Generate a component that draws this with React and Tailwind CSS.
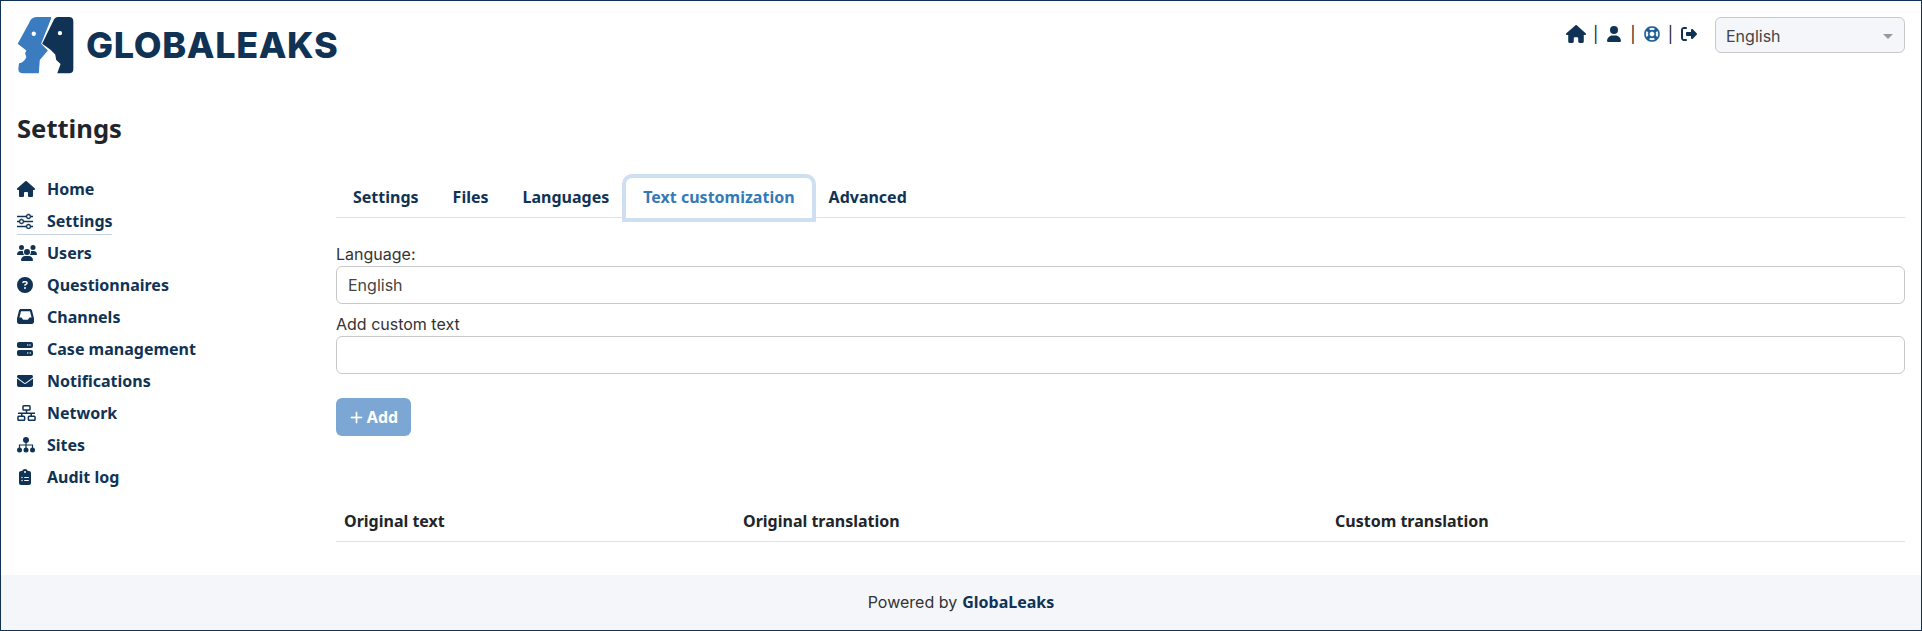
import React from "react";
import { FaHouse, FaUser, FaRightFromBracket, FaUsers, FaCircleQuestion, FaEnvelope, FaClipboardList, FaServer, FaInbox } from "react-icons/fa6";
import { FaRegLifeRing } from "react-icons/fa";
import { BsSliders, BsPlusLg } from "react-icons/bs";

function Logo() {
  return (
    <svg viewBox="50 50 170 170" className="w-[57px] h-[57px] shrink-0">
      <path fill="#3a7cbf" d="M108 50 L150 50 Q153 50 152 54 L122 130 L142 150 L118 178 L115 218 L68 218 Q54 218 54 205 L56 188 Q70 186 78 170 L74 158 L78 150 L52 130 L86 68 Q92 50 108 50 Z" />
      <path fill="#103355" d="M172 50 L205 50 Q218 50 218 63 L218 205 Q218 218 205 218 L170 218 L180 190 L167 178 L164 162 L150 148 L125 130 L158 62 Q163 50 172 50 Z" />
      <circle cx="100" cy="100" r="6.5" fill="#fff" />
      <circle cx="178" cy="98" r="6.5" fill="#fff" />
    </svg>
  );
}

function SitesIcon({ size }) {
  return (
    <svg viewBox="0 0 18 16" width={size} height={size * 16 / 18} fill="currentColor">
      <circle cx="9" cy="3" r="3" />
      <circle cx="2.5" cy="13" r="2.5" />
      <circle cx="9" cy="13" r="2.5" />
      <circle cx="15.5" cy="13" r="2.5" />
      <path d="M8.4 5h1.2v2.4h6.5v3.6h-1.2V8.6H9.6V11H8.4V8.6H3.1V11H1.9V7.4h6.5z" />
    </svg>
  );
}

function NetworkIcon({ size }) {
  return (
    <svg viewBox="0 0 20 17" width={size} height={size * 17 / 20} fill="none" stroke="currentColor" strokeWidth="1.6">
      <rect x="6.3" y="0.8" width="7.4" height="4.4" rx="0.8" />
      <path d="M10 5.2V8.6M1 8.6H19M5 8.6V11.8M15 8.6V11.8" />
      <rect x="1" y="11.8" width="7" height="4.4" rx="0.8" />
      <rect x="12" y="11.8" width="7" height="4.4" rx="0.8" />
    </svg>
  );
}

const nav = [
  [FaHouse, "Home", 18],
  [BsSliders, "Settings", 16],
  [FaUsers, "Users", 20],
  [FaCircleQuestion, "Questionnaires", 16],
  [FaInbox, "Channels", 17],
  [FaServer, "Case management", 16],
  [FaEnvelope, "Notifications", 16],
  [NetworkIcon, "Network", 19],
  [SitesIcon, "Sites", 18],
  [FaClipboardList, "Audit log", 16],
];

export default function App() {
  return (
    <div className="box-border h-[631px] border border-[#103355] flex flex-col bg-white font-['Inter',sans-serif] text-[16px] text-[#212529]">
      <header className="flex justify-between pl-[16px] pr-[16px] pt-[16px] h-[100px] shrink-0">
        <div className="flex items-start gap-[12px]">
          <Logo />
          <span className="font-['Inter',sans-serif] font-extrabold text-[#103355] text-[36px] leading-[57px] tracking-[0.65px]">GLOBALEAKS</span>
        </div>
        <div className="flex items-start text-[#103355]">
          <div className="flex items-center h-[34px] mr-[17px] text-[16px] gap-[7px]">
            <FaHouse size={20} />
            <span className="text-[#212529]">|</span>
            <FaUser size={16} className="mx-[1px]" />
            <span className="text-[#212529]">|</span>
            <FaRegLifeRing size={16} className="mx-[1px] text-[#1d5c96]" strokeWidth={8} />
            <span className="text-[#212529]">|</span>
            <FaRightFromBracket size={16} className="mx-[1px]" />
          </div>
          <div className="relative box-border w-[190px] h-[36px] rounded-[6px] border border-[#c9c9c9] bg-[#f4f6fa] flex items-center pl-[10px] pt-[1px] text-[#444]">
            English
            <span className="absolute right-[11px] top-[16px] w-0 h-0 border-x-[5px] border-x-transparent border-t-[5px] border-t-[#999]"></span>
          </div>
        </div>
      </header>

      <main className="flex-1 flex min-h-0">
        <aside className="w-[335px] shrink-0 pl-[16px]">
          <h1 className="font-['Noto_Sans',sans-serif] font-bold text-[25.6px] leading-[32px] text-[#212529] mt-[12px]">Settings</h1>
          <nav className="mt-[27.5px] flex flex-col font-['Noto_Sans',sans-serif] font-bold text-[#103355] text-[16px]">
            {nav.map(([Icon, label, size]) => (
              <div key={label} className="h-[32.1px] flex items-center">
                <div className={label === "Settings" ? "flex items-center h-[27px] mt-[2px] border-b border-[#c8d2e6] w-[95px]" : "flex items-center"}>
                  <span className="w-[30px] flex items-center shrink-0"><Icon size={size} strokeWidth={label === "Settings" ? 0.5 : undefined} /></span>
                  <span>{label}</span>
                </div>
              </div>
            ))}
          </nav>
        </aside>

        <section className="flex-1 min-w-0 pr-[16px] pt-[71px]">
          <div className="flex h-[46px] border-b border-[#dee2e6] font-['Noto_Sans',sans-serif] font-bold text-[#103355] text-[16px] leading-[50px]">
            <span className="px-[17px]">Settings</span>
            <span className="px-[17px]">Files</span>
            <span className="px-[17px]">Languages</span>
            <span className="h-[40px] mt-[6px] px-[17px] shadow-[0_0_0_4px_#cddff0] rounded-t-[6px] text-[#337ab7] leading-[38px] bg-white">Text customization</span>
            <span className="px-[17px]">Advanced</span>
          </div>

          <label className="block mt-[24px] leading-[24px] text-[#333]">Language:</label>
          <div className="box-border h-[38px] rounded-[6px] border border-[#c9c9c9] flex items-center pl-[11px] text-[#444]">English</div>
          <label className="block mt-[8px] leading-[24px] text-[#333]">Add custom text</label>
          <div className="box-border h-[38px] rounded-[6px] border border-[#c9c9c9]"></div>
          <button className="mt-[24px] w-[75px] h-[38px] rounded-[6px] bg-[#7ca6d3] text-white font-['Noto_Sans',sans-serif] font-bold flex items-center justify-center gap-[3px]">
            <BsPlusLg size={15} strokeWidth={0.8} /> Add
          </button>

          <div className="mt-[66px] h-[40px] border-b border-[#dee2e6] grid grid-cols-[399px_592px_1fr] pl-[8px] font-['Noto_Sans',sans-serif] font-bold text-[#212529] items-start pt-[7px]">
            <span>Original text</span>
            <span>Original translation</span>
            <span>Custom translation</span>
          </div>
        </section>
      </main>

      <footer className="h-[55px] shrink-0 bg-[#f4f6fa] flex items-center justify-center pb-[1px] text-[#333] gap-[5px]">
        Powered by <span className="font-['Noto_Sans',sans-serif] font-bold text-[#103355]">GlobaLeaks</span>
      </footer>
    </div>
  );
}
